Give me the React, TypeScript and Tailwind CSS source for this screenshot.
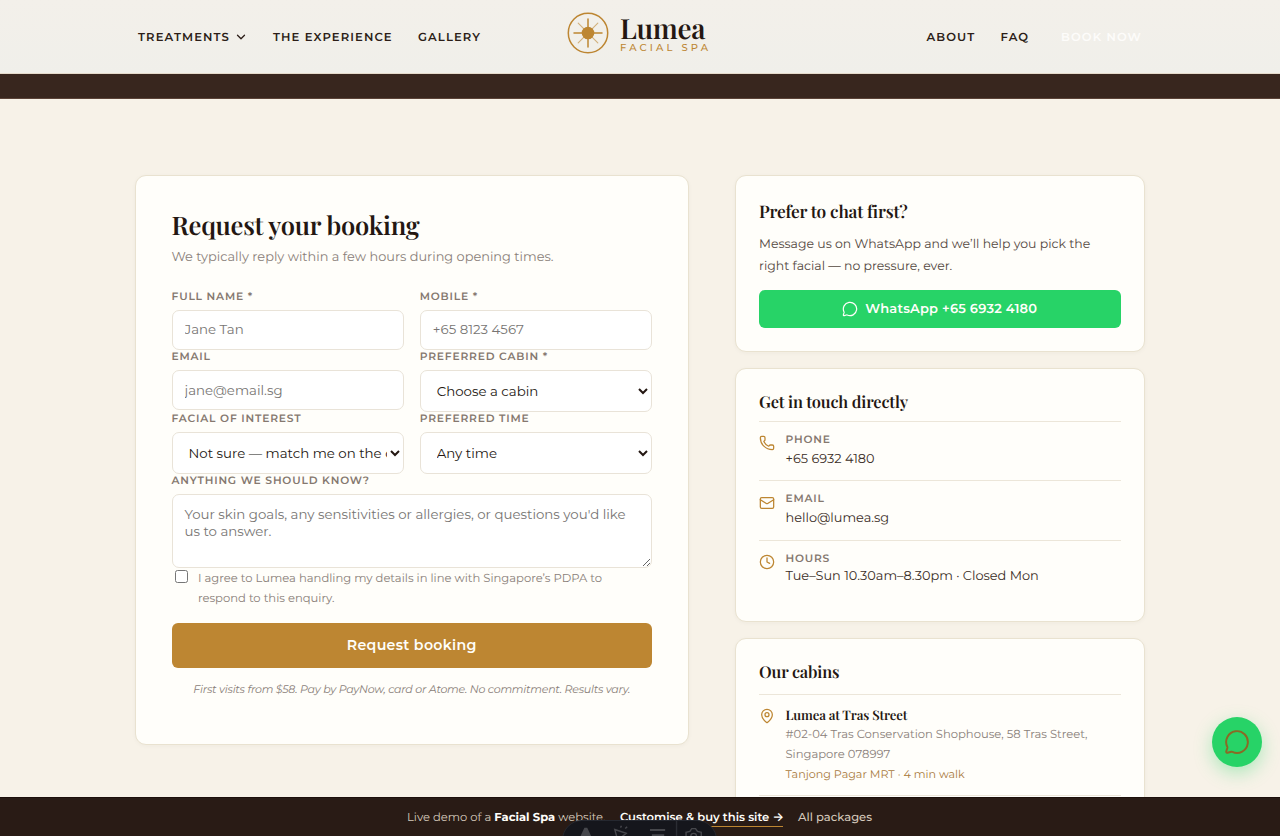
import { ChevronDown, Clock, Mail, MapPin, MessageCircle, Phone } from "lucide-react";
import React, { useState } from "react";

const serif = "font-['Playfair_Display','Liberation_Serif',serif] font-semibold tracking-[-0.01em] text-[#241712]";
const label =
  "block h-[21px] pt-px text-[10.7px] leading-[14px] font-semibold tracking-[0.82px] uppercase text-[#85786f] whitespace-nowrap";
const field =
  "block w-full rounded-[7px] border border-[#e9e3d8] bg-white text-[13.333px] text-[#241712] placeholder:text-[#777573]";

const contacts = [
  { icon: Phone, title: "Phone", value: "+65 6932 4180", gap: "mt-[4px]" },
  { icon: Mail, title: "Email", value: "hello@lumea.sg", gap: "mt-[4px]" },
  { icon: Clock, title: "Hours", value: "Tue–Sun 10.30am–8.30pm · Closed Mon", gap: "mt-[2px]" },
];

const Logo = () => (
  <svg viewBox="0 0 42 42" className="h-[42px] w-[42px]" fill="none" stroke="#bd8632">
    <circle cx="21" cy="21" r="19.7" strokeWidth="1.5" />
    <g strokeWidth="1.5" strokeLinecap="round">
      <path d="M21 7v28M7 21h28" />
    </g>
    <path d="M11.2 11.2l19.6 19.6M30.8 11.2L11.2 30.8" strokeWidth="1.1" strokeOpacity=".6" strokeLinecap="round" />
    <circle cx="21" cy="21" r="6.3" fill="#bd8632" stroke="none" />
  </svg>
);

const Header = () => (
  <header className="relative h-[74px] border-b border-[#e5dacb] bg-linear-to-b from-[#f3f0ea] to-[#f0efea] text-[11.6px] font-semibold text-[#2b1d17]">
    <div className="mx-auto flex h-[73px] w-[1004px] items-center justify-between pt-[2px] whitespace-nowrap">
      <nav className="flex items-center">
        <a className="flex w-[135px] items-center tracking-[1.1px]">
          TREATMENTS <ChevronDown className="ml-[4px] h-3.5 w-3.5" strokeWidth={2.2} />
        </a>
        <a className="w-[145px] tracking-[1.1px]">THE EXPERIENCE</a>
        <a className="tracking-[1.1px]">GALLERY</a>
      </nav>
      <nav className="flex items-center">
        <a className="w-[74px] tracking-[1.1px]">ABOUT</a>
        <a className="w-[60.5px] tracking-[1.1px]">FAQ</a>
        <a className="w-[81px] tracking-[1.1px] text-[#fdfcfa]">BOOK NOW</a>
      </nav>
    </div>
    <div className="absolute top-3 left-[567px] flex">
      <Logo />
      <div className="ml-[11px]">
        <div className={`${serif} h-[30px] pt-px text-[27.8px] leading-[30px]`}>Lumea</div>
        <div className="text-[10px] leading-[12px] font-medium tracking-[3.15px] whitespace-nowrap text-[#bd8632]">FACIAL SPA</div>
      </div>
    </div>
  </header>
);

const BookingForm = () => {
  const [agree, setAgree] = useState<boolean>(false);

  return (
    <form className="h-[570px] rounded-[11px] border border-[#e9e2d0] bg-[#fffefa] px-[35.5px] pt-[33px] shadow-[0_1px_4px_rgba(60,40,20,0.04)]">
      <h2 className={`${serif} h-[38.5px] text-[25.5px] leading-[33px] whitespace-nowrap`}>Request your booking</h2>
      <p className="h-[41px] pt-[0.5px] text-[12.9px] leading-[20px] whitespace-nowrap text-[#8a8079]">
        We typically reply within a few hours during opening times.
      </p>
      <div className="grid grid-cols-2 gap-x-4">
        <div className="h-[60.5px]">
          <label className={label}>Full name *</label>
          <input className={`${field} h-[40px] px-3 pb-px`} placeholder="Jane Tan" />
        </div>
        <div className="h-[60.5px]">
          <label className={label}>Mobile *</label>
          <input className={`${field} h-[40px] px-3 pb-px`} placeholder="+65 8123 4567" />
        </div>
        <div className="h-[62px]">
          <label className={label}>Email</label>
          <input className={`${field} h-[40px] px-3`} placeholder="jane@email.sg" />
        </div>
        <div className="h-[62px]">
          <label className={label}>Preferred cabin *</label>
          <select className={`${field} h-[41.5px] pl-3`}>
            <option>Choose a cabin</option>
          </select>
        </div>
        <div className="h-[62px]">
          <label className={label}>Facial of interest</label>
          <select className={`${field} h-[42px] pl-3`}>
            <option>Not sure — match me on the consult</option>
          </select>
        </div>
        <div className="h-[62px]">
          <label className={label}>Preferred time</label>
          <select className={`${field} h-[42px] pl-3`}>
            <option>Any time</option>
          </select>
        </div>
      </div>
      <label className={label}>Anything we should know?</label>
      <textarea
        className={`${field} h-[74px] resize-y px-3 py-[11px] leading-[17px]`}
        placeholder="Your skin goals, any sensitivities or allergies, or questions you'd like us to answer."
      />
      <div className="flex h-[55px]">
        <input
          type="checkbox"
          checked={agree}
          onChange={(e) => setAgree(e.target.checked)}
          className="mt-[2px] ml-[3px] h-[13px] w-[13px] shrink-0"
        />
        <p className="ml-[10.5px] pt-px text-[11.57px] leading-[19.5px] whitespace-nowrap text-[#8a8079]">
          I agree to Lumea handling my details in line with Singapore’s PDPA to
          <br />
          respond to this enquiry.
        </p>
      </div>
      <button
        type="button"
        className="block h-[44.5px] w-full rounded-[6px] bg-[#bd8632] pt-px text-[14.2px] font-semibold tracking-[0.3px] text-[#fffefa]"
      >
        Request booking
      </button>
      <p className="mt-3 text-center text-[11px] leading-[18px] tracking-[-0.22px] whitespace-nowrap text-[#8a8079] italic">
        First visits from $58. Pay by PayNow, card or Atome. No commitment. Results vary.
      </p>
    </form>
  );
};

const card = "rounded-[11px] border border-[#e9e2d0] bg-[#fffefa] px-[23px] shadow-[0_1px_4px_rgba(60,40,20,0.04)]";

const Sidebar = () => (
  <div className="flex flex-col gap-[16.5px] whitespace-nowrap">
    <div className={`${card} h-[176.5px] pt-[23px]`}>
      <h3 className={`${serif} h-[35px] text-[17.3px] leading-[25px]`}>Prefer to chat first?</h3>
      <p className="h-[56px] text-[12.47px] leading-[21.5px] text-[#54483f]">
        Message us on WhatsApp and we’ll help you pick the
        <br />
        right facial — no pressure, ever.
      </p>
      <a className="flex h-[38px] items-center justify-center gap-[7px] rounded-[6px] bg-[#27d367] text-[13px] font-semibold tracking-[0.2px] text-[#fffefa]">
        <MessageCircle className="h-4 w-4" strokeWidth={1.8} />
        <span className="pt-px">WhatsApp +65 6932 4180</span>
      </a>
    </div>

    <div className={`${card} h-[253.5px] pt-[21px]`}>
      <h3 className={`${serif} h-[30.5px] text-[16.4px] leading-[25px]`}>Get in touch directly</h3>
      {contacts.map((item) => (
        <div key={item.title} className="flex h-[59.5px] border-t border-[#ece6d9] pt-[11px]">
          <item.icon className="mt-[2.5px] h-4 w-4 text-[#bd8632]" strokeWidth={1.9} />
          <div className="ml-[10.5px]">
            <div className="text-[10.7px] leading-[14px] font-semibold tracking-[0.8px] text-[#85786f] uppercase">{item.title}</div>
            <div className={`${item.gap} text-[12.88px] leading-[18px] text-[#3a2d26]`}>{item.value}</div>
          </div>
        </div>
      ))}
    </div>

    <div className={`${card} h-[260px] pt-[21px]`}>
      <h3 className={`${serif} h-[34px] text-[16.4px] leading-[24px]`}>Our cabins</h3>
      <div className="flex h-[102px] border-y border-[#ece6d9] pt-[12px]">
        <MapPin className="mt-px h-4 w-4 text-[#bd8632]" strokeWidth={1.9} />
        <div className="ml-[10.5px]">
          <div className={`${serif} text-[13.15px] leading-[17px]`}>Lumea at Tras Street</div>
          <div className="text-[11.57px] leading-[20px] text-[#8a8079]">
            #02-04 Tras Conservation Shophouse, 58 Tras Street,
            <br />
            Singapore 078997
          </div>
          <div className="text-[11.15px] leading-[20px] text-[#a8793a]">Tanjong Pagar MRT · 4 min walk</div>
        </div>
      </div>
    </div>
  </div>
);

const DemoBar = () => (
  <div className="fixed inset-x-0 bottom-0 h-[39px] overflow-hidden border-t border-[#1d100b] bg-[#291b15] text-[11.55px] whitespace-nowrap text-[#d5c9bb]">
    <div className="flex pt-[9px] pl-[407px] leading-[20px]">
      <span className="w-[213px]">
        Live demo of a <b className="font-bold text-[#fffefa]">Facial Spa</b> website.
      </span>
      <a className="mr-[15px] h-[20px] w-[163px] border-b border-[#bd8632] font-semibold text-[#fffefa]">
        Customise &amp; buy this site <span className="font-[Inter] text-[12px]">→</span>
      </a>
      <a className="font-medium">All packages</a>
    </div>
    {/* dev toolbar peeking in from below */}
    <div className="absolute top-[22px] left-[562px] flex h-10 w-[155px] rounded-full border border-[#252830] bg-[#15161c] text-[#46474c]">
      <svg viewBox="0 0 154 40" className="w-full" fill="none" stroke="currentColor" strokeWidth="1.5">
        <path d="M13 20l6-13h3l6 13h-4l-2-4h-4l-2 4z" fill="currentColor" stroke="none" />
        <path d="M51 9l12 4-9 7zM57 7l1-2M62 8l2-2" />
        <path d="M88 9.5h16M90 15h13" strokeWidth="2" />
        <path d="M116 0v40" stroke="#2b2d34" />
        <path d="M126 18v-6l4-1 2-3h4l2 3 4 1v6" />
        <circle cx="134" cy="16" r="3" />
      </svg>
    </div>
  </div>
);

const App = () => {
  return (
    <div className="relative h-[836px] overflow-hidden bg-[#f7f2e8] font-[Montserrat,Inter,sans-serif] [text-rendering:geometricPrecision]">
      <Header />
      <div className="h-[25px] border-b border-[#5b4338] bg-[#38261e]" />
      <main className="mx-auto grid w-[1010px] grid-cols-[553.5px_409.5px] items-start gap-[46.5px] pt-[76px]">
        <BookingForm />
        <Sidebar />
      </main>
      <a className="fixed right-[18px] bottom-[69.5px] flex h-[50px] w-[50px] items-center justify-center rounded-full bg-[#27d367] text-[#8a6a25] shadow-[0_6px_18px_rgba(37,211,102,0.35)]">
        <MessageCircle className="h-[26px] w-[26px]" strokeWidth={1.8} />
      </a>
      <DemoBar />
    </div>
  );
};

export default App;
